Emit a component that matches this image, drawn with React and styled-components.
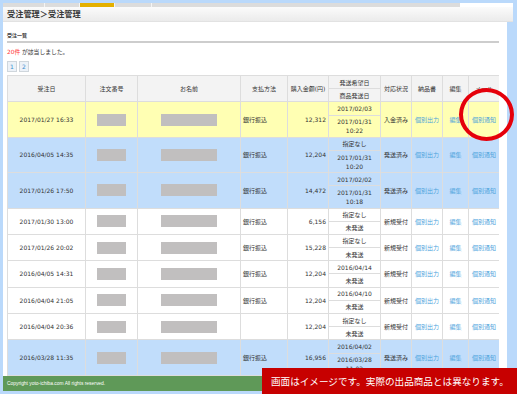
import React from 'react';
import styled, { createGlobalStyle } from 'styled-components';

const GlobalStyle = createGlobalStyle`
  html, body {
    margin: 0;
    padding: 0;
    background: #bad9fb;
  }
  body {
    font-family: "DejaVu Sans", "Noto Sans CJK JP", sans-serif;
    color: #333;
  }
`;

const Page = styled.div`
  position: relative;
  width: 517px;
  height: 394px;
  padding: 3px 0 3px 3px;
  box-sizing: border-box;
  overflow: hidden;
`;

const Panel = styled.div`
  width: 504px;
  height: 100%;
  background: #fff;
  display: flex;
  flex-direction: column;
`;

const TopBar = styled.div`
  margin-right: -6px;
  background: #fff;
`;

const TabStrip = styled.div`
  display: flex;
  gap: 1px;
  width: 457px;
  height: 4px;
  background: #f4f4f4;
`;

const Tab = styled.div`
  flex: none;
  width: ${p => p.$w}px;
  background: ${p => (p.$active ? '#e4b000' : '#dcdcdc')};
`;

const TitleBar = styled.div`
  height: 14px;
  line-height: 14px;
  padding-left: 4px;
  background: linear-gradient(#fbfbfb, #ebebeb);
  border-bottom: 1px solid #e2e2e2;
  font-size: 8.2px;
  font-weight: bold;
  color: #3a3a3a;
`;

const Content = styled.div`
  flex: 1;
  overflow: hidden;
  padding-left: 4px;
  width: 492px;
`;

const SectionTitle = styled.div`
  margin-top: 8px;
  line-height: 10px;
  padding-bottom: 1px;
  border-bottom: 2px solid #cdcdcd;
  font-size: 5px;
  font-weight: bold;
`;

const Count = styled.div`
  margin-top: 4px;
  line-height: 10px;
  font-size: 5.8px;
`;

const Hit = styled.span`
  color: #ff3333;
`;

const Pager = styled.div`
  display: flex;
  gap: 2px;
  margin-top: 4px;
`;

const PageBox = styled.span`
  width: 8px;
  height: 9px;
  line-height: 9px;
  text-align: center;
  border: 1px solid #cfd6dc;
  background: #edf2f8;
  color: #3a8fd0;
  font-size: 6px;
`;

const Table = styled.table`
  margin-top: 3px;
  width: 492px;
  border-collapse: collapse;
  table-layout: fixed;
  border: 1px solid #ddd;
  font-size: 6px;
`;

const Th = styled.th`
  padding: 0;
  border: 1px solid #ddd;
  background: #f3f3f3;
  font-weight: normal;
  text-align: center;
  vertical-align: middle;
`;

const Tr = styled.tr`
  background: ${p => p.$bg || '#fff'};
`;

const Td = styled.td`
  padding: 0 2px;
  border: 1px solid #ddd;
  text-align: ${p => p.$align || 'center'};
  vertical-align: middle;
  white-space: nowrap;
`;

const SplitTd = styled.td`
  padding: 0;
  border: 1px solid #ddd;
  text-align: center;
  vertical-align: middle;
`;

const Sub = styled.div`
  padding: 1.6px 0;
  line-height: 9px;
  & + & {
    border-top: 1px solid #ddd;
  }
`;

const Blank = styled.div`
  margin: 0 auto;
  width: ${p => p.$w}px;
  height: 12px;
  background: #c1bfbf;
`;

const Link = styled.span`
  color: #4ba3dc;
`;

const Footer = styled.div`
  height: 15px;
  line-height: 15px;
  padding-left: 4px;
  background: #5f9958;
  color: #fff;
  font-family: "Liberation Sans", Arial, sans-serif;
  font-size: 4.9px;
`;

const Circle = styled.div`
  position: absolute;
  left: 459px;
  top: 88px;
  width: 55px;
  height: 53px;
  box-sizing: border-box;
  border: 4px solid #e5000b;
  border-radius: 50%;
`;

const Banner = styled.div`
  position: absolute;
  left: 262px;
  top: 368px;
  right: 0;
  bottom: 0;
  display: flex;
  align-items: center;
  padding-left: 9px;
  background: #c70000;
  color: #fff;
  white-space: nowrap;
  font-family: "Noto Sans CJK JP", sans-serif;
  font-size: 9.6px;
`;

const widths = [78, 52, 103, 47, 41, 52, 31, 31, 26, 31];

const rows = [
  { date: '2017/01/27 16:33', pay: '銀行振込', amount: '12,312', wish: ['2017/02/03'], sent: ['2017/01/31', '10:22'], status: '入金済み', bg: '#ffffb3' },
  { date: '2016/04/05 14:35', pay: '銀行振込', amount: '12,204', wish: ['指定なし'], sent: ['2017/01/31', '10:20'], status: '発送済み', bg: '#c1ddfb' },
  { date: '2017/01/26 17:50', pay: '銀行振込', amount: '14,472', wish: ['2017/02/02'], sent: ['2017/01/31', '10:18'], status: '発送済み', bg: '#c1ddfb' },
  { date: '2017/01/30 13:00', pay: '銀行振込', amount: '6,156', wish: ['指定なし'], sent: ['未発送'], status: '新規受付' },
  { date: '2017/01/26 20:02', pay: '銀行振込', amount: '15,228', wish: ['指定なし'], sent: ['未発送'], status: '新規受付' },
  { date: '2016/04/05 14:31', pay: '銀行振込', amount: '12,204', wish: ['2016/04/14'], sent: ['未発送'], status: '新規受付' },
  { date: '2016/04/04 21:05', pay: '銀行振込', amount: '12,204', wish: ['2016/04/10'], sent: ['未発送'], status: '新規受付' },
  { date: '2016/04/04 20:36', pay: '', amount: '12,204', wish: ['指定なし'], sent: ['未発送'], status: '新規受付' },
  { date: '2016/03/28 11:35', pay: '銀行振込', amount: '16,956', wish: ['2016/04/02'], sent: ['2016/03/28', '11:02'], status: '発送済み', bg: '#c1ddfb' },
];

const Lines = ({ lines }) => lines.map((l, i) => (
  <React.Fragment key={i}>
    {i > 0 && <br />}
    {l}
  </React.Fragment>
));

export default function App() {
  return (
    <Page>
      <GlobalStyle />
      <Panel>
        <TopBar>
          <TabStrip>
            <Tab $w={41} />
            <Tab $w={34} />
            <Tab $w={34} $active />
            <Tab $w={36} />
            <Tab $w={308} />
          </TabStrip>
          <TitleBar>受注管理＞受注管理</TitleBar>
        </TopBar>
        <Content>
          <SectionTitle>受注一覧</SectionTitle>
          <Count><Hit>20件</Hit> が該当しました。</Count>
          <Pager>
            <PageBox>1</PageBox>
            <PageBox>2</PageBox>
          </Pager>
          <Table>
            <colgroup>
              {widths.map((w, i) => <col key={i} style={{ width: w }} />)}
            </colgroup>
            <thead>
              <tr>
                <Th>受注日</Th>
                <Th>注文番号</Th>
                <Th>お名前</Th>
                <Th>支払方法</Th>
                <Th>購入金額(円)</Th>
                <Th>
                  <Sub>発送希望日</Sub>
                  <Sub>商品発送日</Sub>
                </Th>
                <Th>対応状況</Th>
                <Th>納品書</Th>
                <Th>編集</Th>
                <Th>メール</Th>
              </tr>
            </thead>
            <tbody>
              {rows.map((r, i) => (
                <Tr key={i} $bg={r.bg}>
                  <Td>{r.date}</Td>
                  <Td><Blank $w={29} /></Td>
                  <Td><Blank $w={56} /></Td>
                  <Td $align="left">{r.pay}</Td>
                  <Td $align="right">{r.amount}</Td>
                  <SplitTd>
                    <Sub><Lines lines={r.wish} /></Sub>
                    <Sub><Lines lines={r.sent} /></Sub>
                  </SplitTd>
                  <Td>{r.status}</Td>
                  <Td><Link>個別出力</Link></Td>
                  <Td><Link>編集</Link></Td>
                  <Td><Link>個別通知</Link></Td>
                </Tr>
              ))}
            </tbody>
          </Table>
        </Content>
        <Footer>Copyright yoto-ichiba.com All rights reserved.</Footer>
      </Panel>
      <Circle />
      <Banner>画面はイメージです。実際の出品商品とは異なります。</Banner>
    </Page>
  );
}
